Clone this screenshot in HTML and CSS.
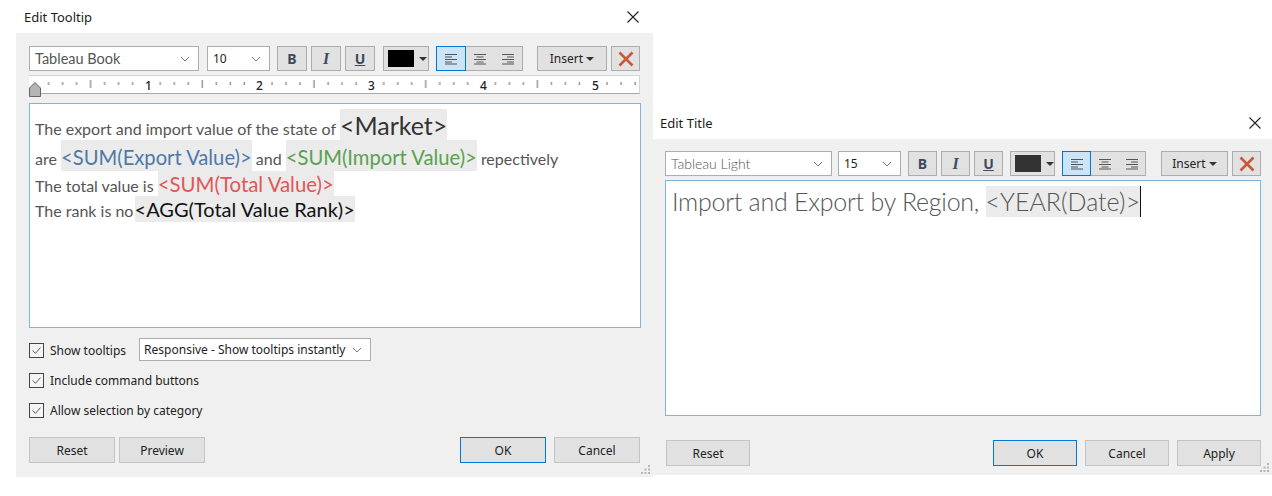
FILE: index.html
```html
<!DOCTYPE html>
<html lang="en">
<head>
  <meta charset="UTF-8">
  <title>Edit Tooltip and Edit Title</title>
  <link rel="stylesheet" href="styles.css">
</head>
<body>
  <svg class="defs" width="0" height="0">
    <defs>
      <symbol id="chevron" viewBox="0 0 10 6"><path d="M1 1l4 4 4-4" fill="none" stroke="#777" stroke-width="1"/></symbol>
      <symbol id="close" viewBox="0 0 12 12"><path d="M.5.5l11 11M11.5.5l-11 11" fill="none" stroke="#222" stroke-width="1.1"/></symbol>
      <symbol id="check" viewBox="0 0 15 15"><path d="M3 7.5l3.3 3.3L12 4.2" fill="none" stroke="#444" stroke-width="1"/></symbol>
      <symbol id="clear" viewBox="0 0 16 16"><path d="M1.5 1.5l13 13M14.5 1.5l-13 13" fill="none" stroke="#c5593a" stroke-width="2.6"/></symbol>
      <symbol id="al-left" viewBox="0 0 14 12"><path d="M1 1.5h12M1 4h7M1 6.5h12M1 9h7M1 11h12" fill="none" stroke="#555" stroke-width="1"/></symbol>
      <symbol id="al-center" viewBox="0 0 14 12"><path d="M1 1.5h12M3.5 4h7M1 6.5h12M3.5 9h7M1 11h12" fill="none" stroke="#555" stroke-width="1"/></symbol>
      <symbol id="al-right" viewBox="0 0 14 12"><path d="M1 1.5h12M6 4h7M1 6.5h12M6 9h7M1 11h12" fill="none" stroke="#555" stroke-width="1"/></symbol>
      <symbol id="grip" viewBox="0 0 11 11"><path d="M8 1h2v2H8zM4.500 4.500h2v2h-2zM8 4.500h2v2H8zM1 8h2v2H1zM4.500 8h2v2h-2zM8 8h2v2H8z" fill="#b5b5b5"/></symbol>
    </defs>
  </svg>

  <main class="desktop">
    <!-- Edit Tooltip -->
    <section class="dialog dialog-tooltip">
      <header class="titlebar">
        <span class="title">Edit Tooltip</span>
        <svg class="close"><use href="#close"/></svg>
      </header>
      <div class="panel">
        <div class="toolbar">
          <div class="combo font-combo"><span class="book">Tableau Book</span><svg class="chev"><use href="#chevron"/></svg></div>
          <div class="combo size-combo"><span>10</span><svg class="chev"><use href="#chevron"/></svg></div>
          <button class="tool tool-b">B</button>
          <button class="tool tool-i">I</button>
          <button class="tool tool-u">U</button>
          <div class="color-btn"><span class="swatch swatch-black"></span><span class="caret"></span></div>
          <div class="align-group">
            <span class="align active"><svg><use href="#al-left"/></svg></span>
            <span class="align"><svg><use href="#al-center"/></svg></span>
            <span class="align"><svg><use href="#al-right"/></svg></span>
          </div>
          <button class="insert">Insert <span class="caret"></span></button>
          <button class="tool clear"><svg><use href="#clear"/></svg></button>
        </div>

        <div class="ruler">
          <svg width="610" height="17">
            <defs>
              <pattern id="ticks" x="5.6" y="0" width="111.7" height="17" patternUnits="userSpaceOnUse">
                <path d="M14 6v3M28 6v3M42 6v3M56 4v8M70 6v3M84 6v3M98 6v3" stroke="#666" stroke-width="1"/>
              </pattern>
            </defs>
            <rect width="610" height="17" fill="url(#ticks)"/>
            <text x="116" y="14">1</text>
            <text x="227" y="14">2</text>
            <text x="339" y="14">3</text>
            <text x="451" y="14">4</text>
            <text x="563" y="14">5</text>
          </svg>
          <svg class="ruler-thumb" viewBox="0 0 12 15"><path d="M.5 14.500V6L6 .5 11.500 6v8.500z" fill="#b4b4b4" stroke="#666"/></svg>
        </div>

        <div class="editor editor-tooltip">
          <div class="line line-1">The export and import value of the state of <span class="tok tok-market">&lt;Market&gt;</span></div>
          <div class="line line-2">are <span class="tok tok-m tok-blue">&lt;SUM(Export Value)&gt;</span> and <span class="tok tok-m tok-green">&lt;SUM(Import Value)&gt;</span> repectively</div>
          <div class="line line-3">The total value is <span class="tok tok-m tok-red">&lt;SUM(Total Value)&gt;</span></div>
          <div class="line line-4">The rank is no <span class="tok tok-m tok-black">&lt;AGG(Total Value Rank)&gt;</span></div>
        </div>

        <div class="option option-first">
          <span class="checkbox"><svg><use href="#check"/></svg></span><span>Show tooltips</span>
          <div class="combo delay-combo"><span>Responsive - Show tooltips instantly</span><svg class="chev"><use href="#chevron"/></svg></div>
        </div>
        <div class="option"><span class="checkbox"><svg><use href="#check"/></svg></span><span>Include command buttons</span></div>
        <div class="option"><span class="checkbox"><svg><use href="#check"/></svg></span><span>Allow selection by category</span></div>

        <div class="actions">
          <button class="btn">Reset</button>
          <button class="btn">Preview</button>
          <span class="spacer"></span>
          <button class="btn btn-default">OK</button>
          <button class="btn btn-gap">Cancel</button>
        </div>
        <svg class="grip"><use href="#grip"/></svg>
      </div>
    </section>

    <!-- Edit Title -->
    <section class="dialog dialog-title">
      <header class="titlebar">
        <span class="title">Edit Title</span>
        <svg class="close"><use href="#close"/></svg>
      </header>
      <div class="panel">
        <div class="toolbar">
          <div class="combo font-combo"><span class="light">Tableau Light</span><svg class="chev"><use href="#chevron"/></svg></div>
          <div class="combo size-combo"><span>15</span><svg class="chev"><use href="#chevron"/></svg></div>
          <button class="tool tool-b">B</button>
          <button class="tool tool-i">I</button>
          <button class="tool tool-u">U</button>
          <div class="color-btn"><span class="swatch swatch-dark"></span><span class="caret"></span></div>
          <div class="align-group">
            <span class="align active"><svg><use href="#al-left"/></svg></span>
            <span class="align"><svg><use href="#al-center"/></svg></span>
            <span class="align"><svg><use href="#al-right"/></svg></span>
          </div>
          <button class="insert">Insert <span class="caret"></span></button>
          <button class="tool clear"><svg><use href="#clear"/></svg></button>
        </div>

        <div class="editor editor-title">
          <div class="heading"><span class="heading-text">Import and Export by Region, </span><span class="tok tok-year">&lt;YEAR(Date)&gt;</span><span class="cursor"></span></div>
        </div>

        <div class="actions">
          <button class="btn">Reset</button>
          <span class="spacer"></span>
          <button class="btn btn-default">OK</button>
          <button class="btn btn-gap">Cancel</button>
          <button class="btn btn-gap">Apply</button>
        </div>
        <svg class="grip"><use href="#grip"/></svg>
      </div>
    </section>
  </main>
</body>
</html>
```

FILE: styles.css
```css
* {
  box-sizing: border-box;
}
body {
  margin: 0;
  height: 496px;
  overflow: hidden;
  background: #fff;
  font-family: "Noto Sans", "Open Sans", sans-serif;
  font-size: 12px;
  color: #222;
}
.defs {
  position: absolute;
}
.desktop {
  display: flex;
  align-items: flex-start;
}
.dialog-tooltip {
  width: 653px;
}
.dialog-title {
  width: 619px;
  margin-top: 105px;
}
.titlebar {
  display: flex;
  align-items: center;
  justify-content: space-between;
  height: 33px;
}
.dialog-tooltip .titlebar {
  padding: 0 14px 0 24px;
}
.dialog-title .titlebar {
  height: 34px;
  padding: 1px 11px 0 7px;
}
.title {
  font-size: 13px;
  color: #1c1c1c;
}
.close {
  width: 12px;
  height: 12px;
}
.panel {
  position: relative;
  background: #f0f0f0;
}
.dialog-tooltip .panel {
  margin-left: 16px;
  height: 444px;
  padding: 13px 13px 0;
}
.dialog-title .panel {
  height: 336px;
  padding: 12px 11px 0 12px;
}

/* toolbar */
.toolbar {
  display: flex;
  height: 25px;
}
.toolbar > * {
  flex: none;
}
.combo {
  display: flex;
  align-items: center;
  justify-content: space-between;
  height: 100%;
  background: #fff;
  border: 1px solid #adadad;
  padding: 0 8px 0 5px;
}
.chev {
  width: 10px;
  height: 6px;
}
.font-combo {
  width: 170px;
  margin-right: 8px;
  font-size: 14px;
  color: #555;
}
.dialog-title .font-combo {
  width: 167px;
  margin-right: 6px;
}
.book {
  font-family: Lato, sans-serif;
  font-size: 14.5px;
}
.light {
  font-family: Lato, sans-serif;
  font-weight: 300;
}
.size-combo {
  width: 63px;
  margin-right: 7px;
  color: #222;
}
.tool {
  width: 30px;
  height: 25px;
  margin-right: 4px;
  padding: 0;
  background: #e1e1e1;
  border: 1px solid #adadad;
  font-family: "Noto Sans", sans-serif;
  font-size: 14px;
  font-weight: 700;
  color: #3d4a5c;
}
.dialog-title .tool {
  width: 29px;
}
.tool-i {
  font-family: "Liberation Serif", serif;
  font-size: 16px;
  font-style: italic;
}
.tool-u {
  text-decoration: underline;
  margin-right: 8px;
}
.dialog-title .tool-u {
  margin-right: 7px;
}
.color-btn {
  display: flex;
  align-items: center;
  width: 46px;
  height: 25px;
  margin-right: 7px;
  padding-left: 4px;
  background: #e1e1e1;
  border: 1px solid #adadad;
}
.dialog-title .color-btn {
  width: 45px;
}
.swatch {
  width: 26px;
  height: 17px;
  margin-right: 5px;
}
.swatch-black {
  background: #000;
}
.swatch-dark {
  background: #333;
}
.caret {
  display: inline-block;
  border-left: 4px solid transparent;
  border-right: 4px solid transparent;
  border-top: 4px solid #333;
  vertical-align: 2px;
}
.align-group {
  display: flex;
  width: 87px;
  height: 25px;
  margin-right: 14px;
  background: #e1e1e1;
  border: 1px solid #adadad;
}
.dialog-title .align-group {
  width: 84px;
  margin-right: 15px;
}
.align {
  display: flex;
  align-items: center;
  justify-content: center;
  flex: 1;
  margin: -1px 0;
}
.align.active {
  margin-left: -1px;
  background: #cce4f7;
  border: 1px solid #0078d7;
}
.align svg {
  width: 14px;
  height: 12px;
}
.insert {
  width: 70px;
  height: 25px;
  margin-right: 4px;
  padding: 0;
  background: #e1e1e1;
  border: 1px solid #adadad;
  font-family: "Noto Sans", sans-serif;
  font-size: 12px;
  color: #222;
}
.dialog-title .insert {
  width: 67px;
}
.toolbar .clear {
  width: 29px;
  margin-right: 0;
  display: flex;
  align-items: center;
  justify-content: center;
}
.clear svg {
  width: 16px;
  height: 16px;
}

/* ruler */
.ruler {
  position: relative;
  width: 611px;
  height: 19px;
  margin-top: 4px;
  background: #fff;
  border-top: 1px solid #d5d5d5;
  border-right: 1px solid #d5d5d5;
  border-bottom: 1px solid #a8a8a8;
}
.ruler svg {
  display: block;
}
.ruler text {
  font-family: "Noto Sans", sans-serif;
  font-size: 12px;
  font-weight: 500;
  fill: #222;
}
.ruler svg.ruler-thumb {
  position: absolute;
  left: 0;
  top: 6px;
  width: 12px;
  height: 15px;
}

/* editors */
.editor {
  background: #fff;
  border: 1px solid #7fb4dd;
}
.editor-tooltip {
  width: 612px;
  height: 225px;
  margin-top: 9px;
  padding: 5px 5px 0;
  font-family: Lato, sans-serif;
  font-size: 16px;
  color: #555;
}
.editor-title {
  width: 596px;
  height: 236px;
  margin-top: 4px;
  padding: 5px 6px 0;
}
.line {
  white-space: nowrap;
}
.line-3 {
  height: 25px;
}
.tok {
  display: inline-block;
  background: #ebebeb;
}
.tok-market {
  padding-top: 1px;
  font-size: 25px;
  line-height: 30px;
  color: #333;
}
.tok-m {
  font-size: 20px;
  line-height: 26px;
}
.line-2 .tok-m {
  padding-top: 3px;
  font-size: 20.2px;
  line-height: 28px;
}
.tok-blue {
  color: #4e79a7;
}
.tok-green {
  color: #59a14f;
}
.tok-red {
  color: #e15759;
  font-size: 20.4px;
}
.tok-black {
  margin-left: -3px;
  color: #111;
}
.heading {
  display: flex;
  white-space: pre;
  font-family: Lato, sans-serif;
  font-weight: 300;
  font-size: 25px;
  line-height: 31px;
  color: #555;
}
.heading-text {
  letter-spacing: -0.25px;
}
.cursor {
  width: 1px;
  height: 31px;
  background: #111;
}

/* options */
.option {
  display: flex;
  align-items: center;
  height: 23px;
  margin-top: 7px;
  padding-top: 1px;
  color: #222;
}
.option-first {
  margin-top: 10px;
}
.checkbox {
  width: 15px;
  height: 15px;
  margin-right: 6px;
  background: #f4f4f4;
  border: 1px solid #444;
}
.checkbox svg {
  display: block;
  width: 13px;
  height: 13px;
}
.delay-combo {
  width: 232px;
  height: 23px;
  margin: -1px 0 0 13px;
  padding-left: 4px;
}

/* bottom buttons */
.actions {
  position: absolute;
  left: 13px;
  right: 13px;
  display: flex;
  gap: 4px;
}
.dialog-tooltip .actions {
  top: 404px;
}
.dialog-title .actions {
  top: 301px;
  left: 13px;
  right: 11px;
}
.spacer {
  flex: 1;
}
.btn {
  width: 86px;
  height: 26px;
  padding: 0;
  background: #e1e1e1;
  border: 1px solid #c4c4c4;
  font-family: "Noto Sans", sans-serif;
  font-size: 12px;
  color: #222;
}
.dialog-title .btn {
  width: 84px;
}
.btn-default {
  border: 1px solid #0078d7;
}
.btn-gap {
  margin-left: 4px;
}
.grip {
  position: absolute;
  right: 2px;
  bottom: 2px;
  width: 11px;
  height: 11px;
}
```
